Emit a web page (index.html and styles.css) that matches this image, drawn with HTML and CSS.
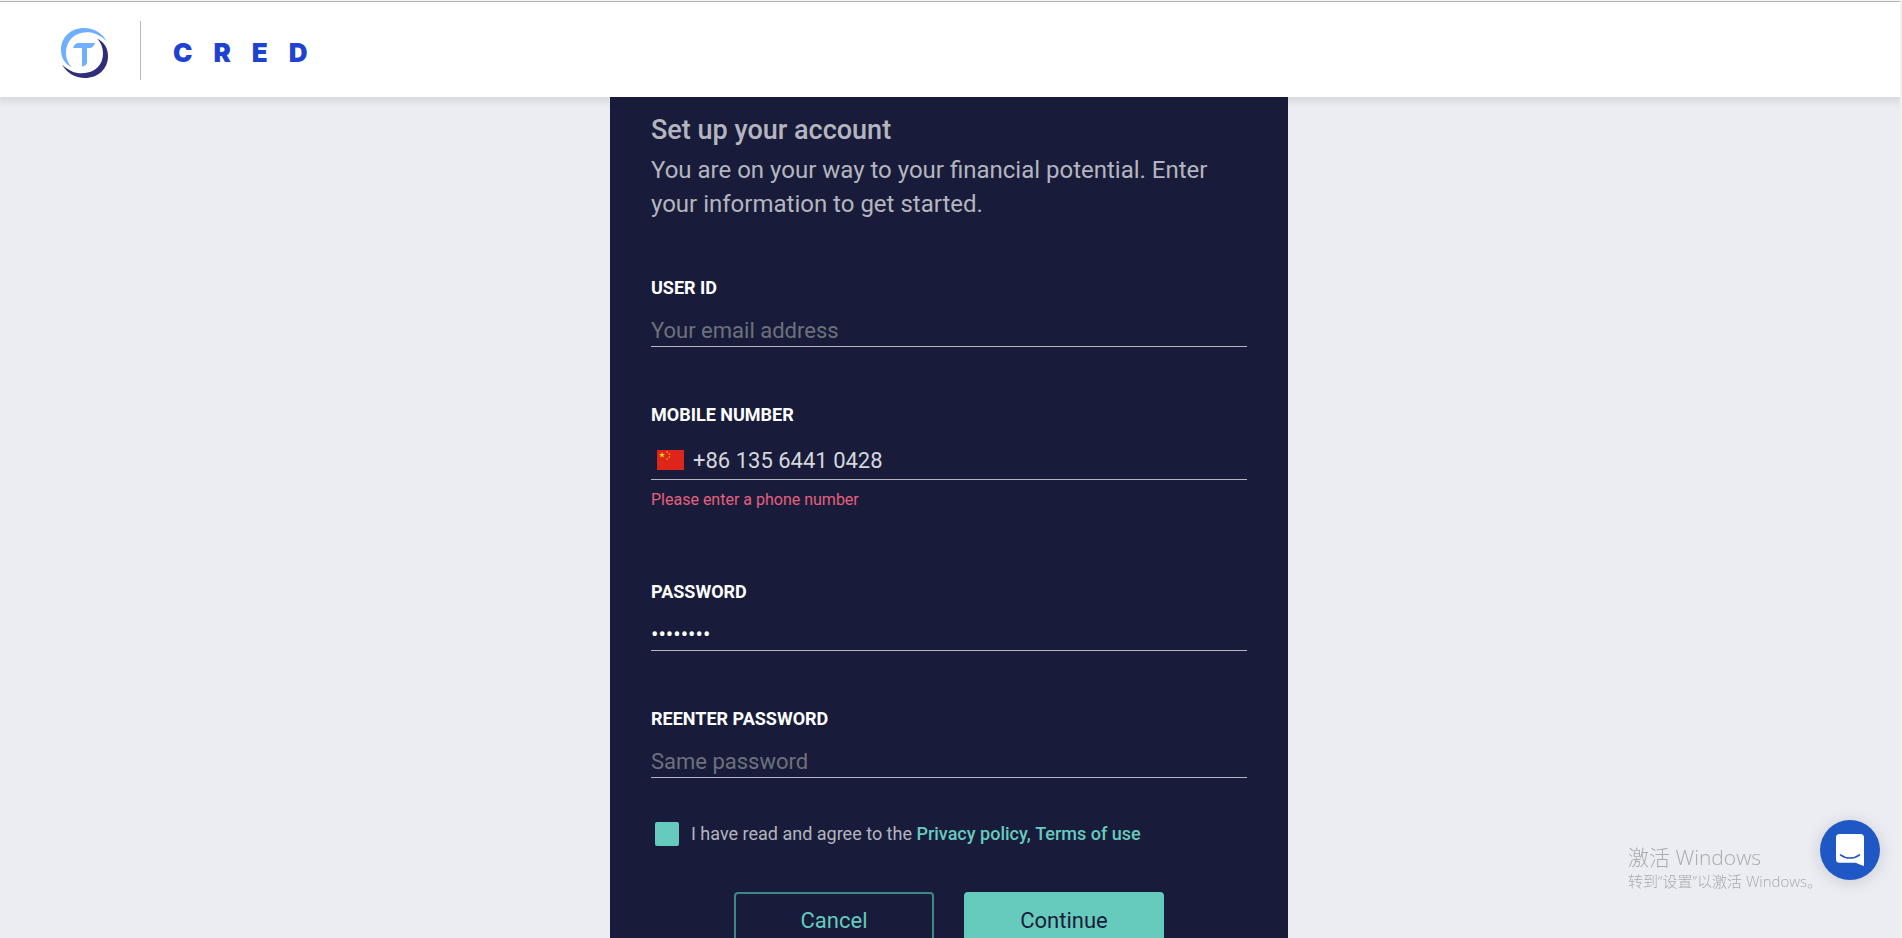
FILE: index.html
```html
<!DOCTYPE html>
<html lang="en">
<head>
<meta charset="utf-8">
<meta name="viewport" content="width=device-width, initial-scale=1">
<title>Cred - Set up your account</title>
<link rel="stylesheet" href="styles.css">
</head>
<body>
<div class="page">
  <header class="header">
    <svg class="logo" viewBox="0 0 48 50" role="img" aria-label="T logo">
      <path fill="#6fafff" d="M11 39.500C4 36 0 30 0 22 0 9 10 0 23 0c10 0 18 5 23 13.500C39 6.500 32 4 25.500 4.200 13 4.500 5 13 5 25c0 6 2 10.500 6 14.500z"/>
      <path fill="#2f2c79" d="M36 10.500C43 14 47 20 47 28c0 13-10 22-23 22C14 50 6 45 1 36.500 8 43 14 45.500 21 45.300 34 45 42 37 42 25.500 42 19.500 40 14.500 36 10.500z"/>
      <path fill="#6fafff" d="M12 20c1-3.500 3-5 6-5h16c-1 3.500-3 5-6 5h-2v14c0 2.500-2 4-5 4.500V20z"/>
    </svg>
    <span class="header-divider"></span>
    <div class="wordmark" aria-label="CRED"><span>C</span><span>R</span><span>E</span><span>D</span></div>
  </header>
  <main class="main">
    <form class="card">
      <h1 class="title">Set up your account</h1>
      <p class="intro">You are on your way to your financial potential. Enter your information to get started.</p>

      <div class="field">
        <label class="label" for="user">USER ID</label>
        <input class="input" id="user" type="email" placeholder="Your email address">
      </div>

      <div class="field field-phone">
        <label class="label" for="phone">MOBILE NUMBER</label>
        <div class="phone">
          <svg class="flag" viewBox="0 0 27 20" aria-hidden="true">
            <path fill="#de2519" d="M0 0h27v20H0z"/>
            <path fill="#ffde00" d="M5 2l.7 2H8L6.200 5.300 6.900 7.500 5 6.200 3.100 7.500l.7-2.200L2 4h2.300z"/>
            <path fill="#ffb000" d="M9.500 1.200h1.200v1.600H9.500zM11.800 3.200H13v1.600h-1.200zM11.800 6.200H13v1.600h-1.200zM9.500 8.200h1.200v1.600H9.500z"/>
          </svg>
          <input class="input" id="phone" type="tel" value="+86 135 6441 0428">
        </div>
        <p class="error">Please enter a phone number</p>
      </div>

      <div class="field">
        <label class="label" for="password">PASSWORD</label>
        <input class="input input-password" id="password" type="password" value="password">
      </div>

      <div class="field">
        <label class="label" for="again">REENTER PASSWORD</label>
        <input class="input" id="again" type="password" placeholder="Same password">
      </div>

      <div class="agree">
        <input class="check" id="agree" type="checkbox">
        <label for="agree">I have read and agree to the <a class="link" href="#">Privacy policy,</a> <a class="link" href="#">Terms of use</a></label>
      </div>

      <div class="actions">
        <button class="button button-outline" type="button">Cancel</button>
        <button class="button button-solid" type="submit">Continue</button>
      </div>
    </form>
  </main>
</div>
<aside class="watermark">
  <p class="watermark-title">激活 Windows</p>
  <p class="watermark-note">转到“设置”以激活 Windows。</p>
</aside>
<button class="chat" type="button" aria-label="Open chat">
  <svg class="chat-icon" viewBox="0 0 28 32" aria-hidden="true">
    <path fill="#fff" d="M3.500 0h21A3.500 3.500 0 0 1 28 3.500V32c-3-.8-5.500-1.800-8-3.200H3.500A3.500 3.500 0 0 1 0 25.300V3.500A3.500 3.500 0 0 1 3.500 0z"/>
    <path fill="none" stroke="#1f58c4" stroke-width="1.600" stroke-linecap="round" d="M4.500 20.800c5.500 4.300 13.500 4.300 19 0"/>
  </svg>
</button>
</body>
</html>
```
FILE: styles.css
```css
* {
  box-sizing: border-box;
}

body {
  margin: 0;
  height: 100vh;
  overflow: hidden;
  background: #ecedf3;
  font-family: Roboto, "Liberation Sans", sans-serif;
  color: #b4b5be;
}

h1,
p {
  margin: 0;
}

.page {
  height: 100vh;
  overflow: hidden;
  border-right: 2px solid #f1f1f1;
}

.page::before {
  content: "";
  display: block;
  height: 1px;
  margin-right: -2px;
  background: #fff;
}

.header {
  display: flex;
  align-items: center;
  height: 96px;
  padding: 7px 61px 0;
  border-top: 1px solid #b4b4b4;
  background: #fff;
  box-shadow: 0 2px 8px 2px rgba(0, 0, 0, 0.1);
}

.logo {
  width: 48px;
  height: 50px;
}

.header-divider {
  width: 1px;
  height: 59px;
  margin: 0 32px 6px 31px;
  background: #b9b9c0;
}

.wordmark {
  display: flex;
  gap: 21px;
  font: 900 26px/32px Inter, sans-serif;
  color: #1e43d0;
}

.main {
  position: relative;
  display: flex;
  justify-content: center;
  padding-right: 2px;
}

.card {
  width: 678px;
  max-width: 100%;
  padding: 16px 41px 40px;
  background: #181c3a;
}

.title {
  font-size: 27px;
  line-height: 34px;
  font-weight: 500;
}

.intro {
  margin: 6px 0 57px;
  font-size: 24px;
  line-height: 34px;
}

.field {
  display: flex;
  flex-direction: column;
  margin-bottom: 58px;
}

.field-phone {
  margin-bottom: 72px;
}

.label {
  margin-bottom: 16px;
  font-size: 18px;
  line-height: 20px;
  font-weight: 700;
  color: #fff;
}

.input {
  width: 100%;
  height: 33px;
  padding: 0;
  border: 0;
  border-bottom: 1px solid #b4b5be;
  border-radius: 0;
  outline: 0;
  background: transparent;
  font: inherit;
  font-size: 22px;
  line-height: 28px;
  color: #d6d7dd;
}

.input::placeholder {
  color: #6d717c;
  opacity: 1;
}

.input-password {
  color: #fff;
}

.phone {
  display: flex;
  align-items: center;
  gap: 9px;
  padding-left: 6px;
  border-bottom: 1px solid #b4b5be;
}

.phone .input {
  height: 38px;
  border-bottom: 0;
}

.flag {
  flex: none;
  width: 27px;
  height: 20px;
}

.error {
  margin-top: 10px;
  font-size: 16px;
  line-height: 20px;
  color: #e5607d;
}

.agree {
  display: flex;
  align-items: center;
  gap: 12px;
  margin-top: -14px;
  padding-left: 4px;
  font-size: 18px;
  line-height: 24px;
}

.check {
  appearance: none;
  width: 24px;
  height: 24px;
  margin: 0;
  border-radius: 2px;
  background: #66cbbd;
}

.link {
  font-weight: 500;
  color: #66cbbd;
  text-decoration: none;
}

.actions {
  display: flex;
  justify-content: center;
  gap: 30px;
  margin-top: 46px;
}

.button {
  width: 200px;
  height: 56px;
  border: 2px solid #3f8783;
  border-radius: 4px;
  font: inherit;
  font-size: 22px;
}

.button-outline {
  background: transparent;
  color: #66cbbd;
}

.button-solid {
  border-color: #66cbbd;
  background: #66cbbd;
  color: #181c3a;
}

.watermark {
  position: fixed;
  right: 78px;
  bottom: 47px;
  width: 196px;
  font-family: "Open Sans", "Noto Sans CJK SC", sans-serif;
  font-weight: 300;
  color: #a9aaae;
  white-space: nowrap;
}

.watermark-title {
  font-size: 21px;
  line-height: 28px;
}

.watermark-note {
  font-size: 15px;
  line-height: 20px;
}

.chat {
  position: fixed;
  right: 22px;
  bottom: 58px;
  display: grid;
  place-items: center;
  width: 60px;
  height: 60px;
  padding: 0;
  border: 0;
  border-radius: 50%;
  background: #1f58c4;
  box-shadow: 0 2px 16px rgba(0, 0, 0, 0.15);
}

.chat-icon {
  width: 28px;
  height: 32px;
}
```
